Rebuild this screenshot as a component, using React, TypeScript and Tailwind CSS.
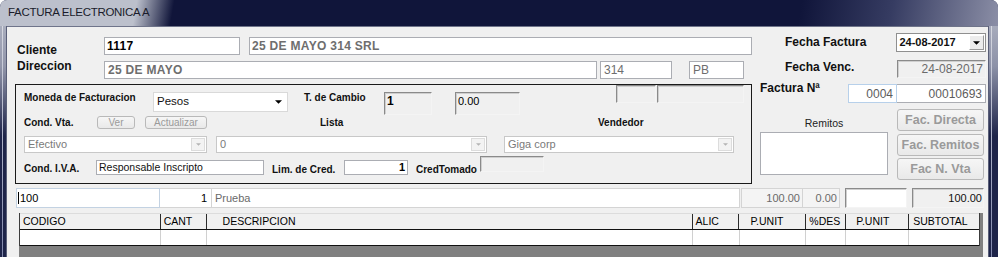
import { ReactNode } from 'react'

// small dropdown triangle
function Arrow({ color = '#000', w = 7 }: { color?: string; w?: number }) {
  return (
    <svg width={w} height={Math.ceil(w / 2)} viewBox="0 0 8 4" className="block">
      <path d="M0 0h8L4 4z" fill={color} />
    </svg>
  )
}

const sunken =
  'border border-t-[#8a8a8a] border-l-[#8a8a8a] border-r-[#f4f4f4] border-b-[#f4f4f4] shadow-[inset_1px_1px_0_#cfcfcf]'
const textbox = 'border border-[#abadb3] bg-white'
const btnOff =
  'flex items-center justify-center rounded-[3px] border border-[#b9b9b9] bg-[linear-gradient(#f6f6f6,#e9e9e9)] text-[#9a9a9a]'

function Label({ children, className = '' }: { children: ReactNode; className?: string }) {
  return <div className={`whitespace-nowrap font-bold leading-[13px] text-[#111] ${className}`}>{children}</div>
}

function OffCombo({ text, className }: { text: string; className: string }) {
  return (
    <div className={`flex h-[17px] items-center justify-between border border-[#c8c8c8] bg-white pl-[3px] pr-[1px] ${className}`}>
      <span className="text-[11px] leading-none text-[#7a7a7a]">{text}</span>
      <div className="flex h-[13px] w-[14px] items-center justify-center border border-[#dcdcdc] bg-[#f3f3f3]">
        <Arrow color="#b4b4b4" w={5} />
      </div>
    </div>
  )
}

const columns = [
  { name: 'CODIGO', w: 'w-[141px]', pad: 'pl-[3px]' },
  { name: 'CANT', w: 'w-[46px]', pad: 'pl-[3px]' },
  { name: 'DESCRIPCION', w: 'w-[487px]', pad: 'pl-[16px]' },
  { name: 'ALIC', w: 'w-[47px]', pad: 'pl-[3px]' },
  { name: 'P.UNIT', w: 'w-[67px]', pad: 'pl-[11px]' },
  { name: '%DES', w: 'w-[40px]', pad: 'pl-[3px]' },
  { name: 'P.UNIT', w: 'w-[63px]', pad: 'pl-[10px]' },
  { name: 'SUBTOTAL', w: 'w-[70px]', pad: 'pl-[4px]' },
]

export default function App() {
  return (
    <div className="h-[257px] w-[998px] overflow-hidden bg-white font-['Liberation_Sans',Arial,sans-serif]">
      <div className="flex h-full flex-col overflow-hidden rounded-t-[7px] bg-[#1b2046]">
        {/* title bar */}
        <div className="flex h-[26px] shrink-0 items-center bg-[linear-gradient(100deg,#bcc0cc_0px,#bcc0cc_135px,#10153a_172px,#10153a_790px,#363c62_880px,#9598ae_1000px)]">
          <span className="pl-[8px] text-[11.5px] tracking-[-0.3px] text-[#1a1c2b]">FACTURA ELECTRONICA A</span>
        </div>

        <div className="flex flex-1">
          {/* left frame */}
          <div className="w-[7px] shrink-0 border-r border-[#5a5f78] bg-[linear-gradient(#a9adbd_0px,#9296aa_40px,#1e2449_110px)]">
            <div className="ml-[2px] h-full w-px bg-[linear-gradient(#d6d8e0,#7b82a8)]" />
          </div>

          {/* client area */}
          <div className="w-[981px] shrink-0 border-t border-[#6f748a] bg-[#f0f0f0]">
            <div className="flex items-start">
              {/* left column */}
              <div className="ml-[8px] w-[737px]">
                <div className="mt-[10px] flex h-[18px]">
                  <Label className="w-[89px] pl-[2px] pt-[7px] text-[12px]">Cliente</Label>
                  <div className={`${textbox} flex h-[18px] w-[136px] items-center px-[2px] text-[12px] font-bold tracking-[0.3px]`}>1117</div>
                  <div className={`${textbox} ml-[9px] flex h-[18px] w-[503px] items-center px-[2px] text-[12px] font-bold tracking-[0.3px] text-[#6e6e6e]`}>
                    25 DE MAYO 314 SRL
                  </div>
                </div>
                <div className="mt-[6px] flex h-[18px]">
                  <Label className="-mt-[1px] w-[89px] pl-[2px] text-[12px]">Direccion</Label>
                  <div className={`${textbox} flex h-[18px] w-[493px] items-center px-[3px] text-[12px] font-bold tracking-[0.3px] text-[#6e6e6e]`}>
                    25 DE MAYO
                  </div>
                  <div className={`${textbox} ml-[3px] flex h-[18px] w-[72px] items-center px-[3px] text-[12px] text-[#6e6e6e]`}>314</div>
                  <div className={`${textbox} ml-[17px] flex h-[18px] w-[55px] items-center px-[3px] text-[12px] text-[#6e6e6e]`}>PB</div>
                </div>

                {/* group box */}
                <div className="mt-[5px] h-[100px] w-[737px] border border-[#1a1a1a]">
                  <div className="flex h-[31px] items-start">
                    <Label className="ml-[8px] mt-[6px] w-[129px] text-[10px]">Moneda de Facturacion</Label>
                    <div className="mt-[7px] flex h-[20px] w-[135px] items-center justify-between border border-[#d9d9d9] bg-white pl-[3px] pr-[5px]">
                      <span className="text-[11.5px] text-[#111]">Pesos</span>
                      <Arrow w={7} />
                    </div>
                    <Label className="ml-[16px] mt-[6px] w-[80px] text-[10px]">T. de Cambio</Label>
                    <div className={`${sunken} mt-[7px] h-[23px] w-[48px] pl-[2px] text-[12px] font-bold leading-[16px]`}>1</div>
                    <div className={`${sunken} ml-[23px] mt-[7px] h-[23px] w-[65px] pl-[2px] text-[11px] leading-[16px]`}>0.00</div>
                    <div className={`${sunken} ml-[96px] h-[18px] w-[40px]`} />
                    <div className={`${sunken} ml-[1px] h-[18px] w-[87px]`} />
                  </div>

                  <div className="flex h-[13px] items-center">
                    <Label className="ml-[8px] w-[73px] text-[10px]">Cond. Vta.</Label>
                    <div className={`${btnOff} h-[13px] w-[38px] text-[10px]`}>Ver</div>
                    <div className={`${btnOff} ml-[10px] h-[13px] w-[62px] text-[10px]`}>Actualizar</div>
                    <Label className="ml-[113px] w-[278px] text-[10px]">Lista</Label>
                    <Label className="text-[10px]">Vendedor</Label>
                  </div>

                  <div className="mt-[7px] flex">
                    <OffCombo text="Efectivo" className="ml-[8px] w-[183px]" />
                    <OffCombo text="0" className="ml-[9px] w-[271px]" />
                    <OffCombo text="Giga corp" className="ml-[17px] w-[230px]" />
                  </div>

                  <div className="mt-[2px] flex h-[28px] items-start">
                    <Label className="ml-[8px] mt-[7px] w-[72px] text-[10px]">Cond. I.V.A.</Label>
                    <div className={`${textbox} mt-[5px] flex h-[15px] w-[168px] items-center px-[2px] text-[10.5px] text-[#111]`}>
                      Responsable Inscripto
                    </div>
                    <Label className="ml-[8px] mt-[8px] w-[72px] text-[10px]">Lim. de Cred.</Label>
                    <div className={`${textbox} mt-[5px] flex h-[15px] w-[64px] items-center justify-end px-[2px] text-[11px] font-bold`}>1</div>
                    <Label className="ml-[8px] mt-[8px] w-[64px] text-[10px]">CredTomado</Label>
                    <div className={`${sunken} mt-[1px] h-[16px] w-[64px]`} />
                  </div>
                </div>
              </div>

              {/* right column */}
              <div className="ml-[8px] w-[226px]">
                <div className="mt-[6px] flex h-[18px]">
                  <Label className="w-[137px] pl-[25px] pt-[3px] text-[12px]">Fecha Factura</Label>
                  <div className="flex h-[19px] w-[90px] items-center justify-between border border-[#8f8f8f] bg-white pl-[2px] pr-[1px]">
                    <span className="text-[11px] font-bold text-[#111]">24-08-2017</span>
                    <div className="flex h-[15px] w-[15px] items-center justify-center border border-t-[#fff] border-l-[#fff] border-r-[#9a9a9a] border-b-[#9a9a9a] bg-[#ececec]">
                      <Arrow w={7} />
                    </div>
                  </div>
                </div>
                <div className="mt-[9px] flex h-[18px]">
                  <Label className="w-[137px] pl-[25px] pt-[1px] text-[12px]">Fecha Venc.</Label>
                  <div className={`${sunken} flex h-[18px] w-[89px] items-center justify-end bg-[#f0f0f0] pr-[2px] text-[12px] text-[#6a6a6a]`}>
                    24-08-2017
                  </div>
                </div>
                <div className="mt-[6px] flex h-[19px]">
                  <Label className="-mt-[2px] w-[88px] text-[12px]">Factura Nª</Label>
                  <div className="flex h-[19px] w-[49px] items-center justify-end border border-[#b7d0ea] bg-white pr-[3px] text-[12px] text-[#5c5c5c]">
                    0004
                  </div>
                  <div className={`${textbox} flex h-[19px] w-[89px] items-center justify-end border-l-0 pr-[3px] text-[12px] text-[#5c5c5c]`}>
                    00010693
                  </div>
                </div>
                <div className="mt-[6px] flex">
                  <div className="w-[128px]">
                    <div className="pt-[8px] text-center text-[10.5px] leading-[12px] text-[#222]">Remitos</div>
                    <div className={`${textbox} mt-[3px] h-[43px] w-[128px]`} />
                  </div>
                  <div className="ml-[9px] flex w-[87px] flex-col">
                    <div className={`${btnOff} h-[22px] text-[12.5px] font-bold text-[#8e8e8e]`}>Fac. Directa</div>
                    <div className={`${btnOff} mt-[3px] h-[22px] text-[12.5px] font-bold text-[#8e8e8e]`}>Fac. Remitos</div>
                    <div className={`${btnOff} mt-[2px] h-[22px] text-[12.5px] font-bold text-[#8e8e8e]`}>Fac N. Vta</div>
                  </div>
                </div>
              </div>
            </div>

            {/* item entry row */}
            <div className="ml-[9px] mt-[4px] flex h-[20px] text-[11px]">
              <div className="flex w-[144px] items-center border border-[#c3d2e2] bg-white pl-[1px]">
                <span className="mr-[1px] h-[12px] w-px bg-black" />
                <span>100</span>
              </div>
              <div className="flex w-[52px] items-center justify-end border-y border-r border-[#d4d4d4] bg-white pr-[4px]">1</div>
              <div className="flex w-[528px] items-center border-y border-r border-[#d4d4d4] bg-white pl-[3px] text-[#6a6a6a]">Prueba</div>
              <div className="ml-px flex w-[62px] items-center justify-end border border-[#d4d4d4] bg-[#f4f4f4] pr-[2px] text-[#6a6a6a]">100.00</div>
              <div className="flex w-[37px] items-center justify-end border-y border-r border-[#d4d4d4] bg-[#f4f4f4] pr-[2px] text-[#6a6a6a]">0.00</div>
              <div className={`${sunken} ml-[5px] w-[62px] bg-white`} />
              <div className={`${sunken} ml-[5px] flex w-[72px] items-center justify-end pr-[1px] text-[#111]`}>100.00</div>
            </div>

            {/* grid */}
            <div className="ml-[12px] mt-[5px] h-[60px] w-[964px] bg-[#808080]">
              <div className="w-[961px] border-l border-r border-[#3c3c3c] text-[10.5px]">
                <div className="flex h-[17px] border-t border-b border-t-[#dcdcdc] border-b-[#111] bg-[#f0f0f0]">
                  {columns.map((c, i) => (
                    <div
                      key={i}
                      className={`${c.w} ${c.pad} flex items-center border-r border-[#2a2a2a] leading-none last:border-r-0`}
                    >
                      {c.name}
                    </div>
                  ))}
                </div>
                <div className="flex h-[16px] border-b border-[#111] bg-white">
                  {columns.map((c, i) => (
                    <div key={i} className={`${c.w} border-r border-[#d0d0d0] last:border-r-0`} />
                  ))}
                </div>
              </div>
            </div>
          </div>

          {/* right frame */}
          <div className="flex-1 border-l border-[#5a5f78] bg-[linear-gradient(#a7abbc_0px,#8d92a8_40px,#1e2449_110px)]">
            <div className="ml-[2px] h-full w-px bg-[linear-gradient(#d6d8e0,#7b82a8)]" />
          </div>
        </div>
      </div>
    </div>
  )
}
